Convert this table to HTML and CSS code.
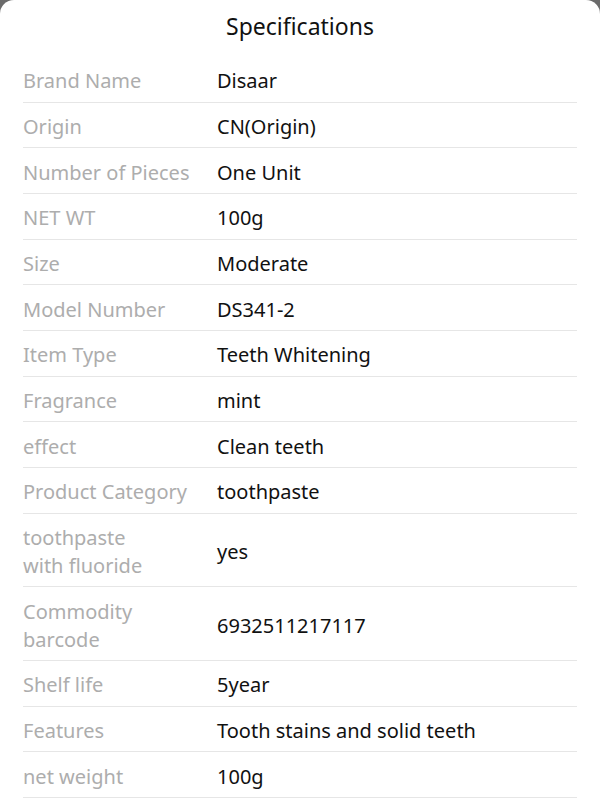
FILE: index.html
```html
<!DOCTYPE html>
<html>
<head>
<meta charset="utf-8">
<link rel="stylesheet" href="styles.css">
</head>
<body>
<div class="sheet">
  <h1 class="title">Specifications</h1>
  <div class="specs">
    <div class="row"><div class="label">Brand Name</div><div class="value">Disaar</div></div>
    <div class="row"><div class="label">Origin</div><div class="value">CN(Origin)</div></div>
    <div class="row"><div class="label">Number of Pieces</div><div class="value">One Unit</div></div>
    <div class="row"><div class="label">NET WT</div><div class="value">100g</div></div>
    <div class="row"><div class="label">Size</div><div class="value">Moderate</div></div>
    <div class="row"><div class="label">Model Number</div><div class="value">DS341-2</div></div>
    <div class="row"><div class="label">Item Type</div><div class="value">Teeth Whitening</div></div>
    <div class="row"><div class="label">Fragrance</div><div class="value">mint</div></div>
    <div class="row"><div class="label">effect</div><div class="value">Clean teeth</div></div>
    <div class="row"><div class="label">Product Category</div><div class="value">toothpaste</div></div>
    <div class="row"><div class="label">toothpaste<br>with fluoride</div><div class="value">yes</div></div>
    <div class="row"><div class="label">Commodity<br>barcode</div><div class="value">6932511217117</div></div>
    <div class="row"><div class="label">Shelf life</div><div class="value">5year</div></div>
    <div class="row"><div class="label">Features</div><div class="value">Tooth stains and solid teeth</div></div>
    <div class="row"><div class="label">net weight</div><div class="value">100g</div></div>
  </div>
</div>
</body>
</html>
```

FILE: styles.css
```css
html, body {
  margin: 0;
  padding: 0;
  background: #6b6b6b;
  height: 100%;
  overflow: hidden;
}
.sheet {
  background: #fff;
  border-radius: 14px 14px 0 0;
  min-height: 804px;
  font-family: "Noto Sans", "Open Sans", sans-serif;
  padding: 0 23px;
}
.title {
  margin: 0;
  padding: 10px 0 14px;
  text-align: center;
  font-size: 23px;
  font-weight: 400;
  line-height: 33px;
  color: #111;
}
.row {
  display: flex;
  align-items: center;
  border-bottom: 1px solid #e6e6e6;
  padding: 10.33px 0 6.33px;
  font-size: 20px;
  line-height: 28px;
}
.label {
  width: 194px;
  flex: none;
  color: #adadad;
}
.value {
  color: #111;
}
```
